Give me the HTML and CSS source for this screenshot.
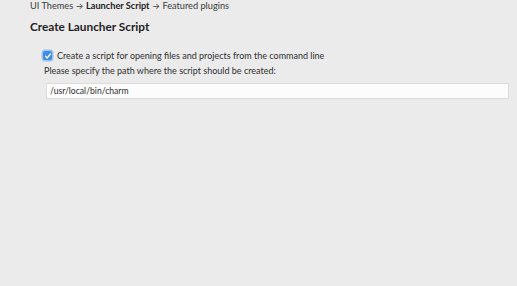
FILE: index.html
```html
<!DOCTYPE html>
<html>
<head>
<meta charset="utf-8">
<link rel="stylesheet" href="styles.css">
</head>
<body>
<div class="page">
  <div class="crumbs">UI Themes <span class="arrow">→</span> <b>Launcher Script</b> <span class="arrow">→</span> Featured plugins</div>
  <h1 class="title">Create Launcher Script</h1>
  <div class="content">
    <label class="check-row">
      <span class="checkbox">
        <svg width="8" height="8" viewBox="0 0 8 8"><path d="M1.6 4.3 L3.2 6 L6.5 1.9" fill="none" stroke="#fff" stroke-width="1.3" stroke-linecap="round" stroke-linejoin="round"/></svg>
      </span>
      <span>Create a script for opening files and projects from the command line</span>
    </label>
    <div class="hint">Please specify the path where the script should be created:</div>
    <div class="field">/usr/local/bin/charm</div>
  </div>
</div>
</body>
</html>
```
FILE: styles.css
```css
html, body {
  margin: 0;
  padding: 0;
  background: #ecebec;
  width: 517px;
  height: 286px;
  overflow: hidden;
}
.page {
  font-family: Lato, "Noto Sans", sans-serif;
  font-size: 9px;
  color: #2e2e2e;
  padding: 0 0 0 30px;
}
.crumbs {
  padding-top: 1px;
  line-height: 10px;
  font-size: 9.2px;
  color: #3a3a3a;
}
.crumbs .arrow {
  font-family: Inter, sans-serif;
  font-size: 8.5px;
}
.crumbs b {
  font-weight: 700;
  color: #222;
}
.title {
  margin: 9px 0 0 0;
  font-size: 11.8px;
  font-weight: 700;
  color: #1e1e1e;
  line-height: 14px;
}
.content {
  padding-left: 13px;
  padding-right: 8px;
  margin-top: 15px;
}
.check-row {
  display: flex;
  align-items: center;
  gap: 5px;
  height: 12px;
}
.checkbox {
  width: 9px;
  height: 9px;
  margin-top: 1px;
  border-radius: 2px;
  background: #3d8ee4;
  box-shadow: 0 0 0 1.5px #9fc3ea;
  display: flex;
  align-items: center;
  justify-content: center;
}
.hint {
  margin-top: 4px;
  margin-left: 1px;
  line-height: 12px;
}
.field {
  margin: 6px 0 0 3px;
  height: 14px;
  line-height: 14px;
  background: #fdfcfd;
  border: 1px solid #dcdcdc;
  padding-left: 3px;
  font-size: 8.6px;
  color: #2e2e2e;
}
```
